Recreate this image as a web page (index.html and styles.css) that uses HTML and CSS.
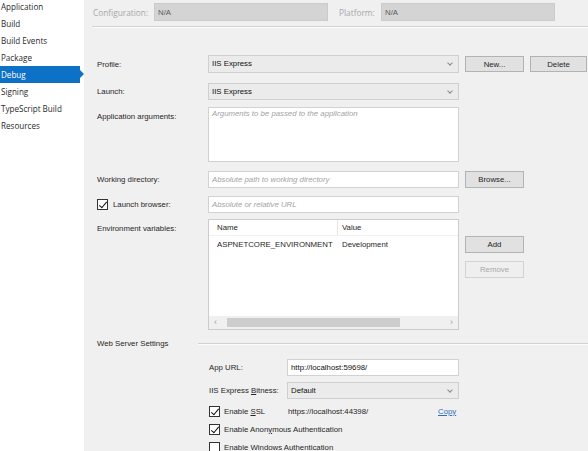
FILE: index.html
```html
<!DOCTYPE html>
<html>
<head>
<meta charset="utf-8">
<link rel="stylesheet" href="styles.css">
</head>
<body>
<div class="app">
  <nav class="sidebar">
    <div class="nav-item">Application</div>
    <div class="nav-item">Build</div>
    <div class="nav-item">Build Events</div>
    <div class="nav-item">Package</div>
    <div class="nav-item active">Debug</div>
    <div class="nav-item">Signing</div>
    <div class="nav-item">TypeScript Build</div>
    <div class="nav-item">Resources</div>
  </nav>
  <main class="main">
    <div class="topbar">
      <span class="top-label">Configuration:</span>
      <div class="top-select">N/A</div>
      <span class="top-label plat">Platform:</span>
      <div class="top-select">N/A</div>
    </div>
    <div class="top-sep"></div>

    <div class="row r-profile">
      <label class="lbl mid">Profile:</label>
      <div class="select">IIS Express<span class="chev"></span></div>
      <button class="btn">New...</button>
      <button class="btn">Delete</button>
    </div>
    <div class="row r-launch">
      <label class="lbl mid">Launch:</label>
      <div class="select">IIS Express<span class="chev"></span></div>
    </div>
    <div class="row r-args">
      <label class="lbl top">Application arguments:</label>
      <div class="input area"><span class="ph">Arguments to be passed to the application</span></div>
    </div>
    <div class="row r-wd">
      <label class="lbl mid">Working directory:</label>
      <div class="input"><span class="ph">Absolute path to working directory</span></div>
      <button class="btn">Browse...</button>
    </div>
    <div class="row r-lb">
      <label class="lbl mid chk-lbl"><span class="cb checked"></span>Launch browser:</label>
      <div class="input"><span class="ph">Absolute or relative URL</span></div>
    </div>
    <div class="row r-env">
      <label class="lbl top">Environment variables:</label>
      <div class="table">
        <div class="thead">
          <div class="th c1">Name</div>
          <div class="th c2">Value</div>
        </div>
        <div class="trow">
          <div class="td c1">ASPNETCORE_ENVIRONMENT</div>
          <div class="td c2">Development</div>
        </div>
        <div class="tfill"></div>
        <div class="hscroll">
          <span class="arr">&#8249;</span>
          <div class="track"><div class="thumb"></div></div>
          <span class="arr">&#8250;</span>
        </div>
      </div>
      <div class="btn-col">
        <button class="btn">Add</button>
        <button class="btn disabled">Remove</button>
      </div>
    </div>

    <div class="web-head">
      <span class="web-title">Web Server Settings</span>
      <div class="web-line"></div>
    </div>

    <div class="wrow w-url">
      <label class="wlbl">App URL:</label>
      <div class="input winput">http://localhost:59698/</div>
    </div>
    <div class="wrow w-bit">
      <label class="wlbl">IIS Express <u>B</u>itness:</label>
      <div class="select winput">Default<span class="chev"></span></div>
    </div>
    <div class="crow c-ssl">
      <span class="cb checked"></span><span class="ctext ssl">Enable <u>S</u>SL</span>
      <span class="ssl-url">https://localhost:44398/</span>
      <a class="copy">Copy</a>
    </div>
    <div class="crow">
      <span class="cb checked"></span><span class="ctext">Enable Anon<u>y</u>mous Authentication</span>
    </div>
    <div class="crow">
      <span class="cb"></span><span class="ctext">Enable <u>W</u>indows Authentication</span>
    </div>
  </main>
</div>
</body>
</html>
```

FILE: styles.css
```css
* { box-sizing: border-box; }
html, body { margin: 0; padding: 0; }
body {
  width: 588px;
  height: 451px;
  overflow: hidden;
  background: #f0f0f0;
  font-family: "Liberation Sans", Arial, sans-serif;
  font-size: 7.8px;
  color: #262626;
}
.app { display: flex; height: 451px; }

.sidebar {
  width: 84px;
  flex: none;
  background: #ffffff;
  font-family: "Open Sans", "Noto Sans", sans-serif;
  font-size: 8.1px;
  color: #2a2a2a;
}
.nav-item {
  height: 17px;
  line-height: 17px;
  padding-left: 1px;
  position: relative;
}
.nav-item:first-child { margin-top: -2.5px; }
.nav-item.active {
  background: #0d72c6;
  color: #fff;
  width: 80px;
}
.nav-item.active::after {
  content: "";
  position: absolute;
  right: -4px;
  top: 4px;
  border-left: 4px solid #0d72c6;
  border-top: 4.5px solid transparent;
  border-bottom: 4.5px solid transparent;
}

.main { flex: 1; background: #f0f0f0; }

.topbar {
  display: flex;
  align-items: center;
  padding: 3px 0 0 9px;
  height: 21px;
}
.top-label {
  color: #a6a6a6;
  width: 61px;
  font-family: "Open Sans", "Noto Sans", sans-serif;
  font-size: 8.3px;
}
.top-label.plat { width: 42px; margin-left: 11px; }
.top-select {
  width: 174px;
  height: 18px;
  line-height: 18px;
  background: #d4d4d4;
  border: 1px solid #cbcbcb;
  color: #5a5a5a;
  padding-left: 3px;
}
.top-sep {
  margin: 5px 0 0 8px;
  height: 2px;
  border-top: 1px solid #d3d3d3;
  border-bottom: 1px solid #fbfbfb;
}

.row {
  display: grid;
  grid-template-columns: 105px 251px 59px 57px;
  column-gap: 6px;
  padding-left: 13px;
  align-items: start;
}
.r-profile { margin-top: 27px; height: 18px; }
.r-launch { margin-top: 10px; height: 17px; }
.r-args { margin-top: 7px; }
.r-wd { margin-top: 9px; }
.r-lb { margin-top: 8px; }
.r-env { margin-top: 6px; }

.lbl { display: flex; align-items: center; }
.lbl.mid { height: 17px; }
.r-profile .lbl.mid { height: 18px; }
.lbl.top { padding-top: 5px; }

.select {
  position: relative;
  height: 17px;
  line-height: 15px;
  background: #ebebeb;
  border: 1px solid #cfcfcf;
  padding-left: 3px;
  color: #111;
}
.r-profile .select { height: 18px; line-height: 16px; }
.chev {
  position: absolute;
  right: 6px;
  top: 5px;
  width: 4px;
  height: 4px;
  border-right: 1px solid #8a8a8a;
  border-bottom: 1px solid #8a8a8a;
  transform: rotate(45deg);
}
.input {
  height: 17px;
  line-height: 15px;
  background: #fff;
  border: 1px solid #d2d2d2;
  padding-left: 3px;
  color: #111;
}
.input.area { height: 55px; line-height: 12px; }
.ph { color: #a3a3a3; font-style: italic; }

.btn {
  font-family: inherit;
  font-size: 7.8px;
  color: #1e1e1e;
  background: #e1e1e1;
  border: 1px solid #b3b3b3;
  height: 17px;
  padding: 0;
  margin: 0;
}
.r-profile .btn { margin-top: 1px; height: 16px; }
.btn.disabled {
  background: #efefef;
  border-color: #d3d3d3;
  color: #a8a8a8;
}
.btn-col {
  display: flex;
  flex-direction: column;
  gap: 8px;
  padding-top: 17px;
}

.chk-lbl { gap: 5px; }
.cb {
  display: inline-block;
  position: relative;
  width: 11px;
  height: 11px;
  background: #fff;
  border: 1px solid #333;
  flex: none;
}
.cb.checked::after {
  content: "";
  position: absolute;
  left: 3px;
  top: 0px;
  width: 3px;
  height: 7px;
  border-right: 1.7px solid #111;
  border-bottom: 1.7px solid #111;
  transform: rotate(40deg);
}

.table {
  height: 111px;
  background: #fff;
  border: 1px solid #cccccc;
  display: flex;
  flex-direction: column;
}
.thead { display: flex; height: 16px; line-height: 16px; border-bottom: 1px solid #f0f0f0; }
.th.c1 { width: 129px; padding-left: 8px; border-right: 1px solid #e5e5e5; }
.th.c2 { padding-left: 4px; }
.trow { display: flex; height: 17px; line-height: 17px; }
.td.c1 { width: 129px; padding-left: 8px; }
.td.c2 { padding-left: 4px; }
.tfill { flex: 1; }
.hscroll {
  height: 13px;
  background: #f0f0f0;
  display: flex;
  align-items: center;
  color: #a0a0a0;
}
.arr { width: 13px; text-align: center; font-size: 9px; line-height: 13px; }
.track { flex: 1; height: 13px; padding: 2px 0; }
.thumb { width: 173px; height: 9px; background: #cdcdcd; margin-left: 5px; }

.web-head {
  display: flex;
  align-items: center;
  margin-top: 7px;
  padding-left: 13px;
  height: 13px;
}
.web-title { width: 101px; }
.web-line {
  flex: 1;
  height: 2px;
  border-top: 1px solid #d3d3d3;
  border-bottom: 1px solid #fbfbfb;
}

.wrow {
  display: grid;
  grid-template-columns: 79px 172px;
  padding-left: 124px;
  align-items: center;
  height: 17px;
}
.w-url { margin-top: 9px; }
.w-bit { margin-top: 6px; }
.wlbl { padding-left: 1px; }
.winput { height: 17px; }

.crow {
  display: flex;
  align-items: center;
  height: 18px;
  padding-left: 125px;
}
.c-ssl { margin-top: 3px; }
.ctext { margin-left: 4px; }
.ctext.ssl { width: 64px; }
.ssl-url { width: 150px; }
.copy { color: #2f6fbf; text-decoration: underline; }
```
